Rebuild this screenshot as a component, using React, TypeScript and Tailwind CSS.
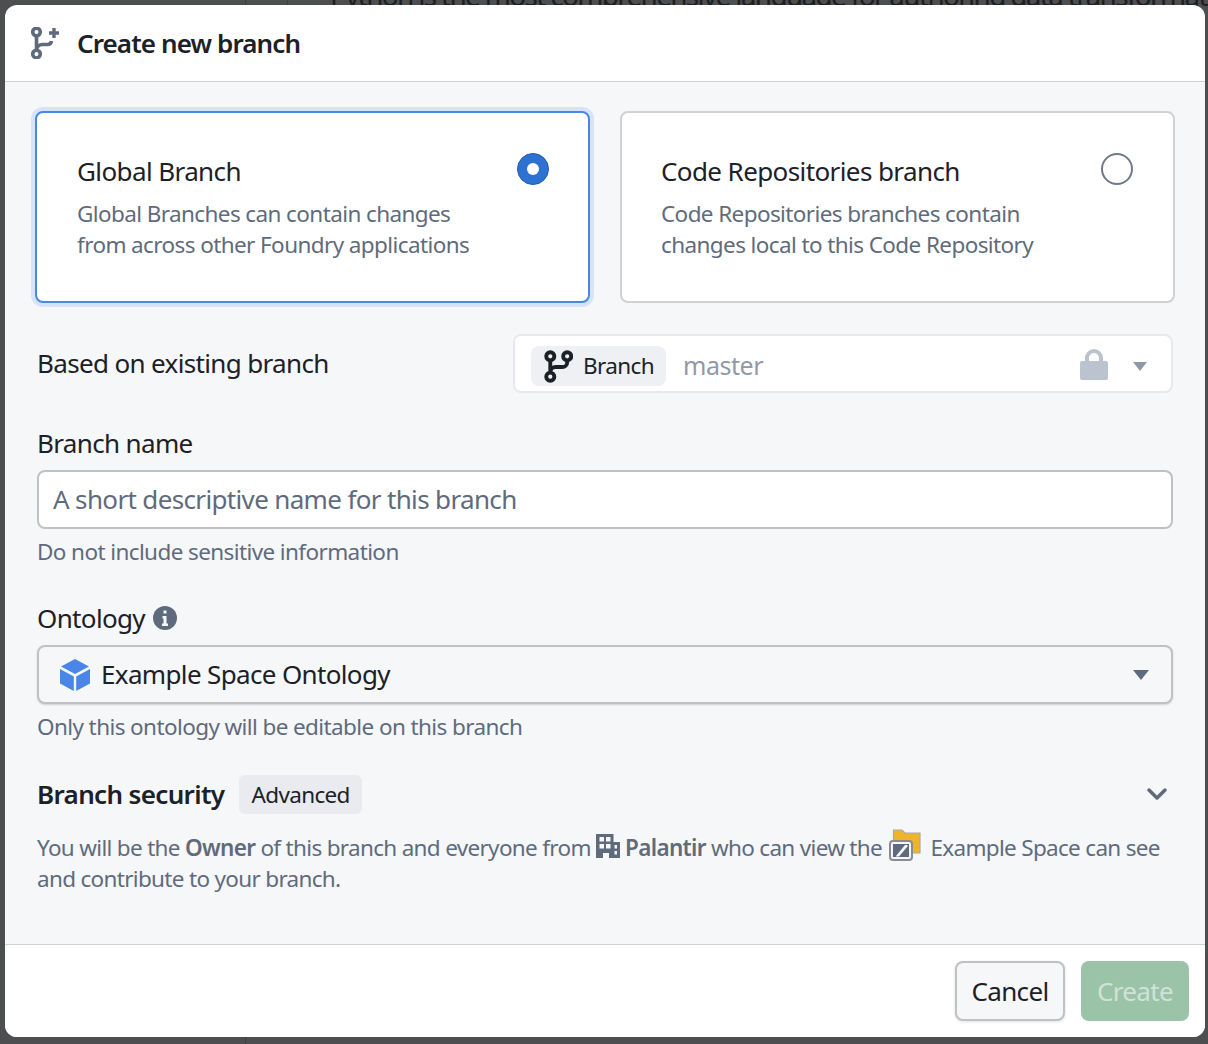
import { ChevronDown } from "lucide-react";

const font = { fontFamily: '"Noto Sans", sans-serif' };

function BranchIcon({ className }: { className?: string }) {
  return (
    <svg viewBox="0 0 30 34" className={className} fill="none" stroke="currentColor" strokeWidth="4">
      <circle cx="6.5" cy="6.5" r="4.200" />
      <circle cx="6.5" cy="27.5" r="4.200" />
      <circle cx="24" cy="6.5" r="4.200" />
      <path d="M6.5 10.5v13M24 10.5v2a5 5 0 0 1-5 5H12a5.5 5.5 0 0 0-5.500 5" />
    </svg>
  );
}

function NewBranchIcon({ className }: { className?: string }) {
  return (
    <svg viewBox="0 0 28 32" className={className} fill="none" stroke="currentColor" strokeWidth="3.6">
      <circle cx="5.5" cy="5" r="3.800" />
      <circle cx="5.5" cy="27" r="3.800" />
      <path d="M5.500 8.500v15M20.500 14a4 4 0 0 1-4 3.500h-5a6 6 0 0 0-6 5.500" />
      <path d="M23 1v10M18 6h10" strokeWidth="3.400" />
    </svg>
  );
}

function OptionCard({ title, lines, selected }: { title: string; lines: string[]; selected?: boolean }) {
  return (
    <div
      className={
        selected
          ? "relative h-[192px] rounded-lg border-2 border-[#4a86e8] bg-white pl-[40px] pt-[40px] shadow-[0_0_0_4px_#d6e3f8]"
          : "relative h-[192px] rounded-lg border-2 border-[#d0d1d3] bg-white pl-[39px] pt-[40px]"
      }
    >
      <div className="text-[26px] leading-[36px] tracking-[-0.6px] text-[#1c2127]">{title}</div>
      <div className="mt-[10px] text-[22.5px] leading-[30.500px] tracking-[-0.6px] text-[#5f6b7c]">
        {lines.map((l) => (
          <div key={l}>{l}</div>
        ))}
      </div>
      {selected ? (
        <div className="absolute right-[39px] top-[40px] flex h-8 w-8 items-center justify-center rounded-full border border-[#215db0] bg-[#2d72d2]">
          <div className="h-3 w-3 rounded-full bg-white" />
        </div>
      ) : (
        <div className="absolute right-[40px] top-[40px] h-8 w-8 rounded-full border-2 border-[#6f7a89] bg-white" />
      )}
    </div>
  );
}

export default function App() {
  return (
    <div className="relative h-[1044px] overflow-hidden bg-[#4d4e50] pb-[7px] pl-[5px] pr-[3px] pt-[5px]" style={font}>
      {/* page behind the dialog */}
      <div className="absolute left-[245px] top-0 h-full w-px bg-[#3f4042]" />
      <div className="absolute left-[287px] top-0 h-[5px] w-px bg-[#3f4042]" />
      <div className="absolute left-[330px] top-[-20px] whitespace-nowrap text-[28px] leading-[30px] tracking-[-1.7px] text-[#1e1f21]">
        Python is the most comprehensive language for authoring data transformat
      </div>

      <div className="relative flex h-full flex-col overflow-hidden rounded-xl bg-white">
        <header className="flex h-[76px] shrink-0 items-center pl-[26px]">
          <NewBranchIcon className="h-[32px] w-[28px] text-[#5f6b7c]" />
          <h1 className="ml-[18px] text-[26px] font-semibold tracking-[-0.9px] text-[#1c2127]">Create new branch</h1>
        </header>

        <main className="flex-1 border-y border-[#cfd1d4] bg-[#f6f7f9] pl-[32px] pr-[32px] pt-[29px]">
          <div className="ml-[-2px] mr-[-2px] grid grid-cols-2 gap-[30px]">
            <OptionCard
              selected
              title="Global Branch"
              lines={["Global Branches can contain changes", "from across other Foundry applications"]}
            />
            <OptionCard
              title="Code Repositories branch"
              lines={["Code Repositories branches contain", "changes local to this Code Repository"]}
            />
          </div>

          <div className="mt-[31px] flex items-center justify-between">
            <div className="text-[26px] tracking-[-0.65px] text-[#1c2127]">Based on existing branch</div>
            <div className="flex h-[59px] w-[660px] items-center rounded-lg border-2 border-[#e8e9ec] bg-white pl-[16px] pr-[24px] pt-[5px]">
              <div className="flex h-[40px] w-[135px] items-center rounded-lg bg-[#eff0f3] pl-[13px]">
                <BranchIcon className="h-[33px] w-[29px] text-[#1c2127]" />
                <span className="ml-[10px] text-[22.5px] tracking-[-0.6px] text-[#1c2127]">Branch</span>
              </div>
              <span className="ml-[17px] text-[25px] tracking-[-0.45px] text-[#8f99a8]">master</span>
              <svg viewBox="0 0 28 32" className="ml-auto mt-[-5px] h-[32px] w-[28px] fill-[#bbc3cf]">
                <path d="M5 14V10a9 9 0 0 1 18 0v4h-4v-4a5 5 0 0 0-10 0v4z" />
                <rect x="0" y="13" width="28" height="19" rx="2" />
              </svg>
              <svg viewBox="0 0 14 9" className="ml-[25px] h-[9px] w-[14px] fill-[#8f99a8]">
                <path d="M0 0h14L7 9z" />
              </svg>
            </div>
          </div>

          <label className="mt-[32px] block text-[26px] leading-[36px] tracking-[-0.65px] text-[#1c2127]">Branch name</label>
          <div className="mt-[9px] flex h-[59px] items-center rounded-lg border-2 border-[#bfc1c5] bg-white pl-[14px] text-[26px] tracking-[-0.65px] text-[#5f6b7c]">
            A short descriptive name for this branch
          </div>
          <p className="mt-[8px] text-[22.5px] leading-[30px] tracking-[-0.6px] text-[#5f6b7c]">Do not include sensitive information</p>

          <div className="mt-[33px] flex items-center text-[26px] leading-[36px] tracking-[-0.65px] text-[#1c2127]">
            Ontology
            <svg viewBox="0 0 24 24" className="ml-[8px] h-6 w-6">
              <circle cx="12" cy="12" r="12" fill="#5f6b7c" />
              <path d="M9.5 10h4v7.500h1.500V20H9v-2.500h1.500V12.500H9.500zM10.500 4.500h3v3h-3z" fill="#f6f7f9" />
            </svg>
          </div>
          <div className="mt-[9px] flex h-[59px] items-center rounded-lg border-2 border-[#bfc1c5] bg-[#f6f7f9] pl-[21px] pr-[22px] shadow-[0_1px_2px_rgba(0,0,0,0.15)]">
            <svg viewBox="0 0 30 32" className="h-[32px] w-[30px]">
              <path d="M15 0 29 7.500 15 15 1 7.500z" fill="#4a86e8" />
              <path d="M0 10 13.800 17.500V32L0 24.500z" fill="#4a86e8" />
              <path d="M30 10 16.200 17.500V32L30 24.500z" fill="#4a86e8" />
            </svg>
            <span className="ml-[11px] text-[26px] tracking-[-0.65px] text-[#1c2127]">Example Space Ontology</span>
            <svg viewBox="0 0 16 10" className="ml-auto h-[10px] w-[16px] fill-[#5f6b7c]">
              <path d="M0 0h16L8 10z" />
            </svg>
          </div>
          <p className="mt-[8px] text-[22.5px] leading-[30px] tracking-[-0.6px] text-[#5f6b7c]">Only this ontology will be editable on this branch</p>

          <div className="mt-[32px] flex h-[40px] items-center">
            <span className="text-[26px] font-semibold tracking-[-0.65px] text-[#1c2127]">Branch security</span>
            <span className="ml-[15px] rounded-md bg-[#e9ebee] px-[12px] py-[4px] text-[22.5px] leading-[31px] tracking-[-0.65px] text-[#1c2127]">Advanced</span>
            <ChevronDown className="ml-auto h-[32px] w-[32px] text-[#5f6b7c]" strokeWidth={2.6} />
          </div>

          <p className="mt-[18px] text-[22.5px] leading-[31px] tracking-[-0.68px] text-[#5f6b7c]">
            You will be the <b className="font-semibold">Owner</b> of this branch and everyone from{" "}
            <svg viewBox="0 0 24 24" className="inline h-6 w-6 align-[-2px] fill-[#5f6b7c]">
              <path
                fillRule="evenodd"
                d="M0 0h17.500v8H24v16H13v-5H7v5H0zM3.500 3v4.500H8V3zm6.500 0v4.500h4.500V3zM3.500 10v4.500H8V10zm6.500 0v4.500h4.500V10zm8.500 1v3.500H21V11zm0 6v3.500H21V17z"
              />
            </svg>{" "}
            <b className="font-semibold">Palantir</b> who can view the{" "}
            <span className="relative inline-block h-6 w-[38px] align-[-2px]">
              <svg viewBox="0 0 32 32" className="absolute left-[2px] top-[-5px] h-[32px] w-[32px]">
                <path d="M4.500 1h8.500l3 3h15v20H4.500z" fill="#f0b429" stroke="#a8a9ab" strokeWidth="1.200" />
                <rect x="1" y="12" width="22" height="19" rx="3" fill="#f6f7f9" stroke="#8a8c90" strokeWidth="2" />
                <rect x="4" y="15" width="16" height="13" fill="#5f6b7c" />
                <path d="M7 27 16 16h2.500v1.500L10 27.500H7z" fill="#f6f7f9" />
              </svg>
            </span>{" "}
            Example Space can see and contribute to your branch.
          </p>
        </main>

        <footer className="flex h-[92px] shrink-0 items-center justify-end gap-[16px] bg-white pr-[16px]">
          <button className="h-[60px] w-[110px] rounded-lg border-2 border-[#bfc1c5] bg-[#f6f7f9] text-[26px] tracking-[-0.65px] text-[#1c2127] shadow-[0_1px_3px_rgba(0,0,0,0.12)]">
            Cancel
          </button>
          <button className="h-[60px] w-[108px] rounded-lg bg-[#9bc3a8] text-[26px] tracking-[-0.65px] text-[#cfe3d6]">Create</button>
        </footer>
      </div>
    </div>
  );
}
